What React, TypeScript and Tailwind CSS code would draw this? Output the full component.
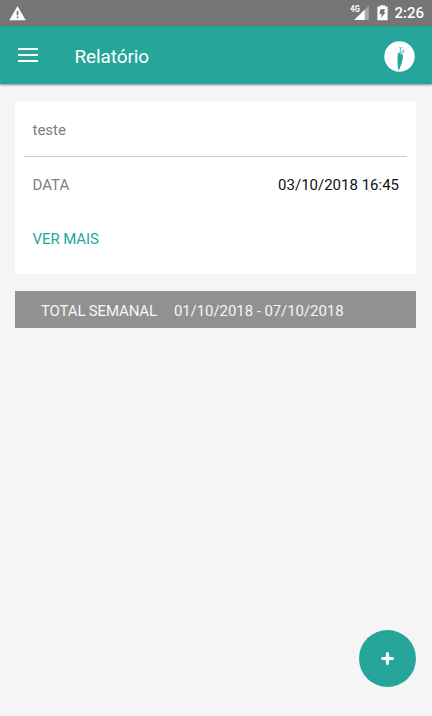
function StatusBar() {
  return (
    <div className="flex h-[26px] items-center bg-[#757575] pr-[8px] pl-[9px] text-white">
      <svg width="17" height="15" viewBox="0 0 17 15" fill="none">
        <path d="M8.5 0.1L16.7 14.2H0.3Z" fill="#fff" />
        <path d="M7.7 5h1.7v4.3h-1.7zM7.7 10.6h1.7v1.7h-1.7z" fill="#757575" />
      </svg>
      <div className="ml-auto flex items-center">
        <svg width="19" height="16" viewBox="0 0 19 16">
          <path d="M18.8 0.8V15H4.2Z" fill="#a9a9a9" />
          <path d="M14.7 4.8V15H4.2Z" fill="#fff" />
          <path d="M0 0H10.5V5.5L8 8H0Z" fill="#757575" />
          <text x="0.3" y="7.3" fill="#fff" fontSize="9" fontWeight="700" textLength="9.5" lengthAdjust="spacingAndGlyphs">4G</text>
        </svg>
        <svg className="ml-[8px]" width="11" height="16" viewBox="0 0 11 16">
          <path d="M3 0.2h5v1.4h2.6v13.6H0.4V1.6H3z" fill="#fff" />
          <path d="M3.4 4.2h4.8L6.7 7.3h2L4 13l.8-4H2.4z" fill="#757575" />
        </svg>
        <span className="ml-[6px] text-[15px] leading-none font-medium">2:26</span>
      </div>
    </div>
  );
}

function Header() {
  return (
    <header className="relative flex h-[58px] items-center bg-[#26a69a] pr-[17px] pl-[18px] shadow-[0_1px_2px_rgba(0,0,0,0.45)]">
      <button className="flex w-[20px] flex-col gap-[4px]" aria-label="Menu">
        <span className="h-[2px] w-full bg-white" />
        <span className="h-[2px] w-full bg-white" />
        <span className="h-[2px] w-full bg-white" />
      </button>
      <h1 className="ml-[36.5px] pt-[2px] text-[19px] leading-none tracking-[-0.1px] text-white">Relatório</h1>
      <svg className="ml-auto mt-[2px]" width="31" height="31" viewBox="0 0 31 31" fill="none">
        <circle cx="15.5" cy="15.5" r="15.2" fill="#fff" />
        <path d="M14 12C15.2 10.7 18 12 19 14C19 19 17.3 24.6 14.6 29.7C13.4 26 13.2 17.5 14 12Z" fill="#26a69a" />
        <path d="M15.4 6.2l1.5 1.2 1.5-1.2M16.9 7.4l-.8 2.4 1.4 2M19.4 8.8l.2 1.8-2.4 1.2" stroke="#26a69a" strokeWidth="1.1" opacity="0.65" />
        <path d="M15.4 12.2l3.2 1.9" stroke="#fff" strokeWidth="0.6" opacity="0.8" />
      </svg>
    </header>
  );
}

function ReportCard({ name, date }: { name: string; date: string }) {
  return (
    <section className="h-[173px] bg-white px-[9px]">
      <div className="flex h-[56px] items-center border-b border-[#cacaca] px-[8.5px] pt-[4px] text-[#808080]">
        {name}
      </div>
      <div className="flex h-[56px] items-center justify-between pr-[8px] pl-[8.5px]">
        <span className="text-[#808080]">DATA</span>
        <span className="text-[#111]">{date}</span>
      </div>
      <button className="mt-[10px] block h-[32px] px-[8.5px] tracking-[-0.1px] text-[#26a69a]">VER MAIS</button>
    </section>
  );
}

export default function App() {
  return (
    <div className="flex h-[716px] w-[432px] flex-col bg-[#f5f5f5] font-['Roboto',sans-serif] text-[15px]">
      <StatusBar />
      <Header />
      <main className="flex flex-1 flex-col pt-[17px] pr-[16px] pb-[29px] pl-[15px]">
        <ReportCard name="teste" date="03/10/2018 16:45" />
        <div className="mt-[17px] flex h-[37px] items-center bg-[#919191] pt-[3px] pl-[26px] text-[#f5f5f5]">
          <span className="tracking-[-0.16px]">TOTAL SEMANAL</span>
          <span className="ml-[17px] tracking-[-0.07px]">01/10/2018 - 07/10/2018</span>
        </div>
        <button
          className="mt-auto flex size-[57px] items-center justify-center self-end rounded-full bg-[#26a69a]"
          aria-label="Adicionar"
        >
          <svg width="13" height="13" viewBox="0 0 13 13">
            <path d="M6.5 1.7v9.6M1.7 6.5h9.6" stroke="#fff" strokeWidth="3.2" strokeLinecap="round" />
          </svg>
        </button>
      </main>
    </div>
  );
}
